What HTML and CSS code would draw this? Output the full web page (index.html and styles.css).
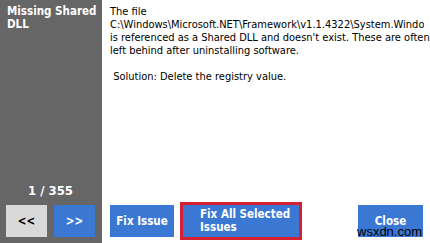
FILE: index.html
```html
<!DOCTYPE html>
<html>
<head>
<meta charset="utf-8">
<link rel="stylesheet" href="styles.css">
</head>
<body>
<div class="window">
  <aside class="sidebar">
    <div class="title">Missing Shared DLL</div>
    <div class="counter">1 / 355</div>
    <div class="nav">
      <button class="btn light">&lt;&lt;</button>
      <button class="btn blue">&gt;&gt;</button>
    </div>
  </aside>
  <main class="main">
    <div class="desc">
      <div>The file</div>
      <div class="path">C:\Windows\Microsoft.NET\Framework\v1.1.4322\System.Windows.Forms.dll</div>
      <div>is referenced as a Shared DLL and doesn't exist. These are often</div>
      <div>left behind after uninstalling software.</div>
      <div>&nbsp;</div>
      <div>&nbsp;Solution: Delete the registry value.</div>
    </div>
    <div class="actions">
      <button class="btn blue fix">Fix Issue</button>
      <button class="btn blue fixall">Fix All Selected Issues</button>
      <button class="btn blue close">Close</button>
    </div>
  </main>
</div>
<div class="watermark">wsxdn.com</div>
</body>
</html>
```
FILE: styles.css
```css
html, body {
  margin: 0;
  padding: 0;
  width: 430px;
  height: 243px;
  overflow: hidden;
  background: #ffffff;
}
body {
  position: relative;
  font-family: "DejaVu Sans Condensed", "DejaVu Sans", sans-serif;
  font-size: 11px;
}
.window {
  display: flex;
  width: 430px;
  height: 243px;
}
.sidebar {
  width: 102px;
  flex: none;
  background: #666666;
  display: flex;
  flex-direction: column;
  padding: 5px 7px 6px 6px;
  box-sizing: border-box;
}
.title {
  color: #ffffff;
  font-weight: bold;
  font-size: 11.5px;
  line-height: 13px;
  padding-left: 1px;
  margin-right: -7px;
}
.counter {
  margin-top: auto;
  color: #ffffff;
  font-weight: bold;
  font-size: 13px;
  text-align: center;
  line-height: 14px;
  margin-bottom: 7px;
}
.nav {
  display: flex;
  gap: 7px;
}
.btn {
  border: none;
  margin: 0;
  height: 32px;
  font-family: "DejaVu Sans Condensed", "DejaVu Sans", sans-serif;
  font-size: 11.5px;
  font-weight: bold;
  line-height: 13px;
  color: #ffffff;
  padding: 0;
  box-sizing: border-box;
}
.nav .btn {
  width: 41px;
}
.light {
  background: #d9d9d9;
  color: #000000;
}
.blue {
  background: #3a78d4;
  color: #ffffff;
}
.main {
  flex: 1;
  display: flex;
  flex-direction: column;
  padding: 5px 7px 6px 8px;
  box-sizing: border-box;
  min-width: 0;
}
.desc {
  color: #000000;
  line-height: 13px;
  white-space: nowrap;
}
.path {
  overflow: hidden;
  margin-right: -1px;
}
.actions {
  margin-top: auto;
  display: flex;
  align-items: center;
}
.fix {
  width: 64px;
}
.fixall {
  width: 116px;
  margin-left: 9px;
  outline: 3px solid #d42030;
  text-align: left;
  padding-left: 17px;
}
.close {
  width: 65px;
  margin-left: auto;
}
.watermark {
  position: absolute;
  left: 357px;
  top: 225px;
  font-family: "Liberation Sans", Arial, sans-serif;
  font-size: 13px;
  color: #000000;
  line-height: 14px;
}
```
